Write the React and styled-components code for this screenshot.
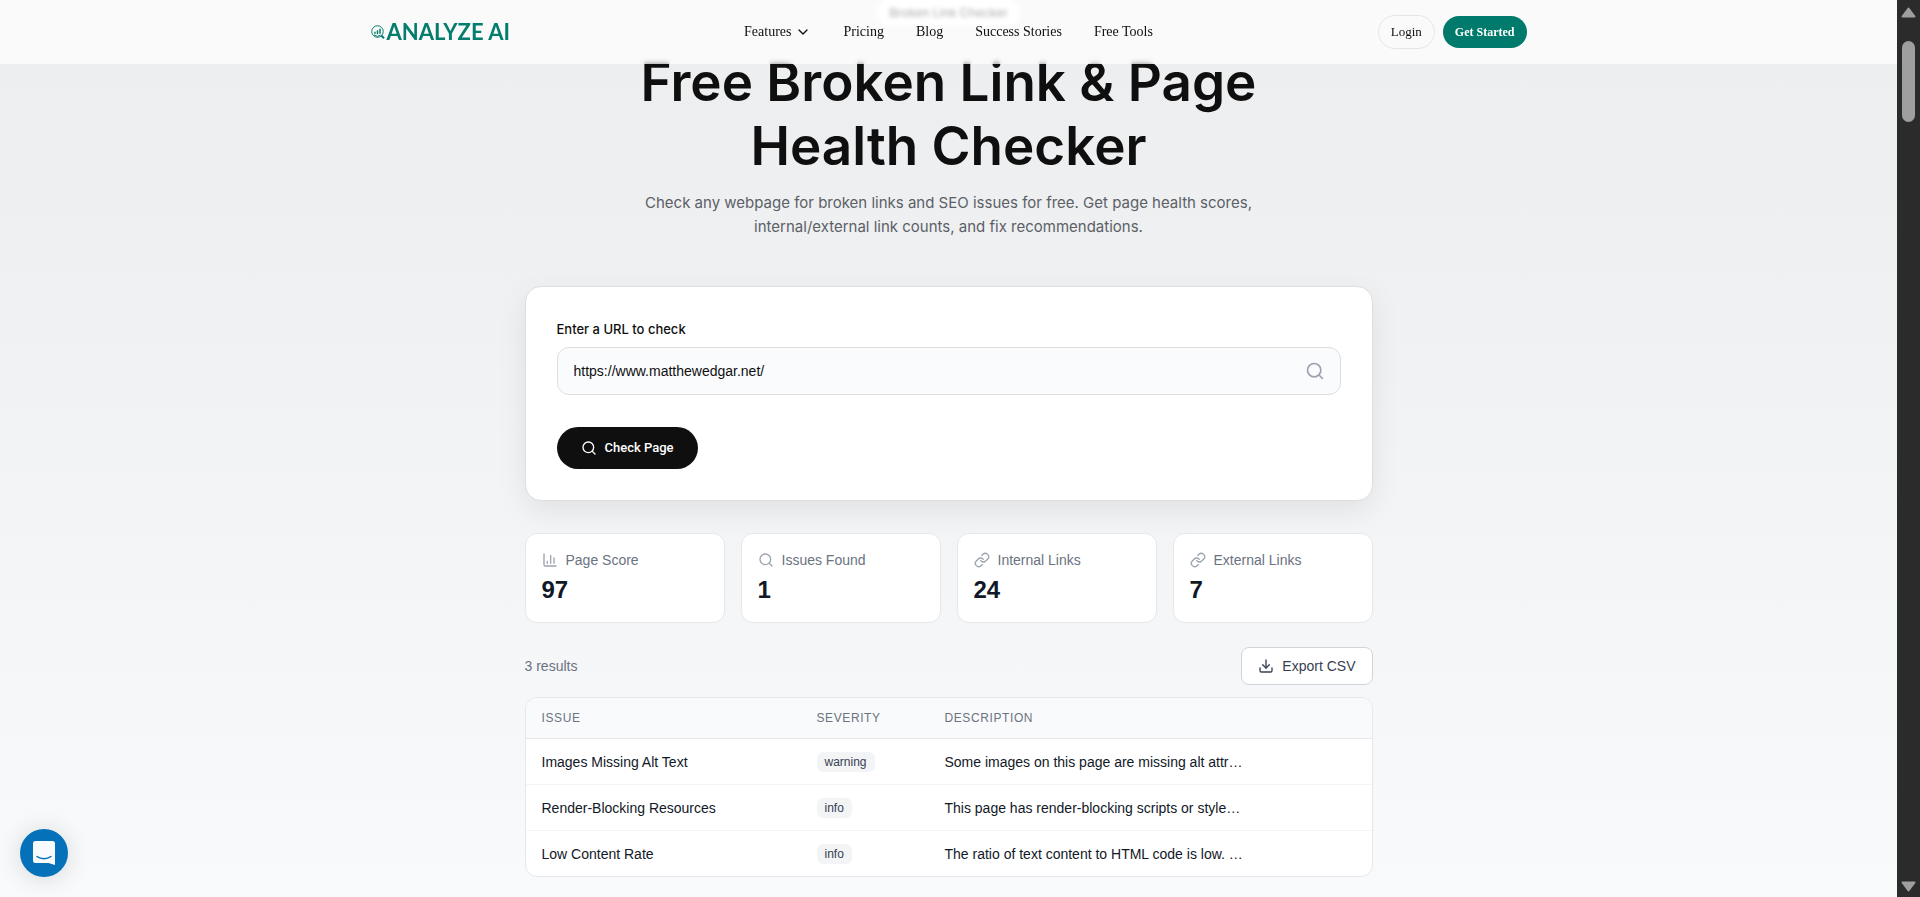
import React, { useState } from "react";
import styled, { createGlobalStyle } from "styled-components";
import {
  ChevronDown,
  Download,
  Link as LinkIcon,
  Search,
} from "lucide-react";

const stats = [
  { label: "Page Score", value: 97, icon: "chart" },
  { label: "Issues Found", value: 1, icon: "search" },
  { label: "Internal Links", value: 24, icon: "link" },
  { label: "External Links", value: 7, icon: "link" },
];

const issues = [
  {
    issue: "Images Missing Alt Text",
    severity: "warning",
    description: "Some images on this page are missing alt attr…",
  },
  {
    issue: "Render-Blocking Resources",
    severity: "info",
    description: "This page has render-blocking scripts or style…",
  },
  {
    issue: "Low Content Rate",
    severity: "info",
    description: "The ratio of text content to HTML code is low. …",
  },
];

export default function App() {
  return (
    <>
      <GlobalStyle />
      <Shell>
        <Page>
          <SiteHeader />
          <Main>
            <Hero>
              <Pill>Broken Link Checker</Pill>
              <Title>Free Broken Link &amp; Page Health Checker</Title>
              <Subtitle>
                Check any webpage for broken links and SEO issues for free. Get
                page health scores, internal/external link counts, and fix
                recommendations.
              </Subtitle>
            </Hero>
            <CheckForm />
            <StatGrid>
              {stats.map((stat) => (
                <Stat key={stat.label} {...stat} />
              ))}
            </StatGrid>
            <ResultsBar>
              <span>{issues.length} results</span>
              <ExportButton type="button">
                <Download size={16} />
                Export CSV
              </ExportButton>
            </ResultsBar>
            <IssueTable rows={issues} />
          </Main>
        </Page>
        <ScrollTrack />
      </Shell>
      <ChatLauncher />
    </>
  );
}

const SiteHeader = () => (
  <Header>
    <HeaderInner>
      <Logo href="#">
        <LogoMark />
        ANALYZE AI
      </Logo>
      <Nav>
        <NavLink href="#">
          Features
          <ChevronDown size={16} />
        </NavLink>
        <NavLink href="#">Pricing</NavLink>
        <NavLink href="#">Blog</NavLink>
        <NavLink href="#">Success Stories</NavLink>
        <NavLink href="#">Free Tools</NavLink>
      </Nav>
      <Actions>
        <LoginLink href="#">Login</LoginLink>
        <StartLink href="#">Get Started</StartLink>
      </Actions>
    </HeaderInner>
  </Header>
);

const CheckForm = () => {
  const [url, setUrl] = useState("https://www.matthewedgar.net/");

  return (
    <FormCard onSubmit={(e) => e.preventDefault()}>
      <Label htmlFor="url">Enter a URL to check</Label>
      <InputBox>
        <UrlInput
          id="url"
          type="text"
          value={url}
          onChange={(e) => setUrl(e.target.value)}
        />
        <Search size={20} />
      </InputBox>
      <CheckButton type="submit">
        <Search size={16} />
        Check Page
      </CheckButton>
    </FormCard>
  );
};

const Stat = ({ label, value, icon }) => (
  <StatCard>
    <StatLabel>
      <StatIcon icon={icon} />
      {label}
    </StatLabel>
    <StatValue>{value}</StatValue>
  </StatCard>
);

const StatIcon = ({ icon }) => {
  if (icon === "search") return <Search size={16} />;
  if (icon === "link") return <LinkIcon size={16} />;
  return (
    <svg
      width="16"
      height="16"
      viewBox="0 0 24 24"
      fill="none"
      stroke="currentColor"
      strokeWidth="2"
      strokeLinecap="round"
      strokeLinejoin="round"
    >
      <path d="M3 3v16a2 2 0 0 0 2 2h16" />
      <path d="M18 17V9M13 17V5M8 17v-3" />
    </svg>
  );
};

const IssueTable = ({ rows }) => (
  <TableCard>
    <Table>
      <colgroup>
        <col width="275" />
        <col width="128" />
        <col />
      </colgroup>
      <thead>
        <tr>
          <Th>Issue</Th>
          <Th>Severity</Th>
          <Th>Description</Th>
        </tr>
      </thead>
      <tbody>
        {rows.map((row) => (
          <Row key={row.issue}>
            <Td>{row.issue}</Td>
            <Td>
              <Badge>{row.severity}</Badge>
            </Td>
            <Td>{row.description}</Td>
          </Row>
        ))}
      </tbody>
    </Table>
  </TableCard>
);

const LogoMark = () => (
  <svg width="14" height="14" viewBox="0 0 28 28" fill="none" stroke="currentColor">
    <circle cx="13" cy="13" r="11.5" strokeWidth="2" />
    <path d="M8 17.5v-4M13 18.5v-8M18 17.5v-10" strokeWidth="3" />
    <path d="M6 19.5a10 10 0 0 0 13 1" strokeWidth="2" />
    <path d="M20.5 21l5.5 5.5" strokeWidth="4" />
  </svg>
);

const ScrollTrack = () => (
  <Track aria-hidden="true">
    <Arrow width="15" height="11" viewBox="0 0 15 11">
      <path d="M7.5 1.5 13.5 9.5H1.5Z" />
    </Arrow>
    <Thumb />
    <Arrow width="15" height="11" viewBox="0 0 15 11">
      <path d="M7.5 9.5 1.5 1.5h12Z" />
    </Arrow>
  </Track>
);

const ChatLauncher = () => (
  <ChatButton type="button" aria-label="Open chat">
    <svg width="22" height="24" viewBox="0 0 22 24">
      <path
        d="M2.5 0h17A2.5 2.5 0 0 1 22 2.5V24l-6.5-2h-13A2.5 2.5 0 0 1 0 19.5v-17A2.5 2.5 0 0 1 2.5 0Z"
        fill="#f8fafc"
      />
      <path
        d="M4 15.5c4 3 10 3 14 0"
        fill="none"
        stroke="#0571b8"
        strokeWidth="1.5"
        strokeLinecap="round"
      />
    </svg>
  </ChatButton>
);

const GlobalStyle = createGlobalStyle`
  * {
    box-sizing: border-box;
  }
  body {
    margin: 0;
    overflow: hidden;
    font-family: "Liberation Sans", Arial, sans-serif;
    font-size: 14px;
    line-height: 20px;
    color: #111827;
  }
  svg {
    display: block;
    flex-shrink: 0;
  }
  button, input {
    font: inherit;
  }
`;

const Shell = styled.div`
  display: flex;
  height: 100vh;
`;

const Page = styled.div`
  flex: 1;
  min-width: 0;
  overflow: hidden;
  background: linear-gradient(180deg, #edeef0 0%, #edeff1 20%, #f8fafc 100%);
`;

const Header = styled.header`
  position: sticky;
  top: 0;
  z-index: 10;
  height: 64px;
  background: rgba(255, 255, 255, 0.7);
  backdrop-filter: blur(2px);
`;

const HeaderInner = styled.div`
  display: grid;
  grid-template-columns: 1fr auto 1fr;
  align-items: center;
  max-width: 1156px;
  height: 100%;
  margin: 0 auto;
`;

const Logo = styled.a`
  display: flex;
  align-items: center;
  gap: 2px;
  font-family: Lato, sans-serif;
  font-size: 22px;
  font-weight: 700;
  color: #047d6d;
  text-decoration: none;
`;

const Nav = styled.nav`
  display: flex;
  align-items: center;
  gap: 32px;
`;

const NavLink = styled.a`
  display: flex;
  align-items: center;
  gap: 4px;
  font-family: "Liberation Serif", "Times New Roman", serif;
  color: #0f0f0f;
  text-decoration: none;
`;

const Actions = styled.div`
  display: flex;
  align-items: center;
  justify-content: flex-end;
  gap: 8px;
`;

const LoginLink = styled.a`
  padding: 6px 12px;
  border: 1px solid #e5e5e5;
  border-radius: 17px;
  font-family: "Liberation Serif", "Times New Roman", serif;
  font-size: 13px;
  color: #0f0f0f;
  text-decoration: none;
`;

const StartLink = styled(LoginLink)`
  border: 0;
  font-size: 12px;
  font-weight: 700;
  color: #fff;
  background: #007a6b;
`;

const Main = styled.main`
  max-width: 848px;
  margin: -64px auto 0;
`;

const Hero = styled.section`
  display: flex;
  flex-direction: column;
  align-items: center;
  padding-bottom: 47px;
  text-align: center;
`;

const Pill = styled.span`
  padding: 3px 12px;
  border-radius: 13px;
  font-family: Inter, sans-serif;
  font-size: 12px;
  font-weight: 500;
  color: #0f0f0f;
  background: #fff;
`;

const Title = styled.h1`
  max-width: 720px;
  margin: 24px 0 13px;
  font-family: Inter, sans-serif;
  font-size: 53px;
  font-weight: 600;
  line-height: 64px;
  color: #0f0f0f;
`;

const Subtitle = styled.p`
  max-width: 640px;
  margin: 0;
  font-family: Inter, sans-serif;
  font-size: 15px;
  line-height: 24px;
  color: #5c5f66;
`;

const FormCard = styled.form`
  padding: 32px 31px 31px;
  border: 1px solid #dcdee0;
  border-radius: 16px;
  background: #fff;
  box-shadow: 0 10px 30px rgba(15, 15, 15, 0.08);
`;

const Label = styled.label`
  display: block;
  margin-bottom: 8px;
  font-family: Inter, sans-serif;
  font-size: 13px;
  font-weight: 500;
  color: #0f0f0f;
`;

const InputBox = styled.div`
  display: flex;
  align-items: center;
  height: 48px;
  padding: 0 15px 0 16px;
  border: 1px solid #dddddd;
  border-radius: 12px;
  color: #9ca3af;
  background: #fafbfd;
`;

const UrlInput = styled.input`
  flex: 1;
  min-width: 0;
  padding: 0;
  border: 0;
  outline: 0;
  color: #0f0f0f;
  background: none;
`;

const CheckButton = styled.button`
  display: flex;
  align-items: center;
  gap: 8px;
  height: 42px;
  margin-top: 32px;
  padding: 0 24px;
  border: 0;
  border-radius: 21px;
  font-family: Roboto, sans-serif;
  font-size: 13px;
  font-weight: 500;
  color: #fff;
  background: #0f0f0f;
`;

const StatGrid = styled.div`
  display: grid;
  grid-template-columns: repeat(4, 1fr);
  gap: 16px;
  margin-top: 32px;
`;

const StatCard = styled.div`
  padding: 16px;
  border: 1px solid #e5e7eb;
  border-radius: 12px;
  background: #fff;
`;

const StatLabel = styled.div`
  display: flex;
  align-items: center;
  gap: 8px;
  color: #6b7280;

  svg {
    color: #9ca3af;
  }
`;

const StatValue = styled.div`
  margin-top: 4px;
  font-size: 24px;
  font-weight: 700;
  line-height: 32px;
`;

const ResultsBar = styled.div`
  display: flex;
  align-items: center;
  justify-content: space-between;
  margin: 24px 0 12px;
  color: #6b7280;
`;

const ExportButton = styled.button`
  display: flex;
  align-items: center;
  gap: 8px;
  padding: 8px 16px;
  border: 1px solid #d1d5db;
  border-radius: 8px;
  color: #374151;
  background: #fff;
`;

const TableCard = styled.div`
  overflow: hidden;
  border: 1px solid #e5e7eb;
  border-radius: 12px;
  background: #fff;
`;

const Table = styled.table`
  width: 100%;
  table-layout: fixed;
  border-spacing: 0;
`;

const Th = styled.th`
  height: 41px;
  padding: 0 16px;
  border-bottom: 1px solid #e5e7eb;
  font-size: 12px;
  font-weight: 400;
  text-align: left;
  text-transform: uppercase;
  letter-spacing: 0.05em;
  color: #6b7280;
  background: #f9fafb;
`;

const Td = styled.td`
  height: 46px;
  padding: 0 16px;
  border-bottom: 1px solid #f3f4f6;
`;

const Row = styled.tr`
  &:last-child ${Td} {
    height: 45px;
    border-bottom: 0;
  }
`;

const Badge = styled.span`
  display: inline-block;
  padding: 2px 8px;
  border-radius: 6px;
  font-size: 12px;
  line-height: 16px;
  color: #374151;
  background: #f3f4f6;
`;

const Track = styled.div`
  display: flex;
  flex-direction: column;
  align-items: center;
  width: 23px;
  padding: 7px 0 5px;
  background: #2b2b2b;
`;

const Arrow = styled.svg`
  fill: #9f9f9f;
  stroke: #9f9f9f;
  stroke-width: 2;
  stroke-linejoin: round;
`;

const Thumb = styled.div`
  width: 13px;
  height: 81px;
  margin: 23px 0 auto;
  border-radius: 7px;
  background: #9f9f9f;
`;

const ChatButton = styled.button`
  position: fixed;
  bottom: 20px;
  left: 20px;
  z-index: 20;
  display: flex;
  align-items: center;
  justify-content: center;
  width: 48px;
  height: 48px;
  padding: 0;
  border: 0;
  border-radius: 50%;
  background: #0571b8;
  box-shadow: 0 2px 24px rgba(0, 0, 0, 0.14);
`;
